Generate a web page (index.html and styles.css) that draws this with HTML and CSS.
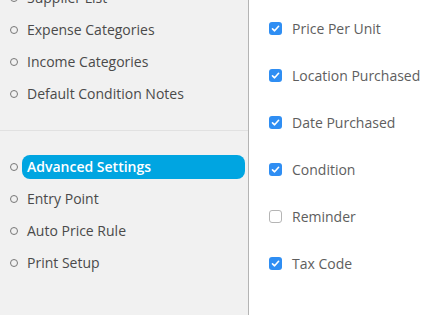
FILE: index.html
```html
<!DOCTYPE html>
<html>
<head>
<meta charset="utf-8">
<link rel="stylesheet" href="styles.css">
</head>
<body>
<div class="page">
  <aside class="sidebar">
    <ul class="menu menu-top">
      <li class="item cut"><span class="label">Supplier List</span></li>
      <li class="item"><span class="label">Expense Categories</span></li>
      <li class="item"><span class="label">Income Categories</span></li>
      <li class="item"><span class="label">Default Condition Notes</span></li>
    </ul>
    <ul class="menu menu-bottom">
      <li class="item active"><span class="label">Advanced Settings</span></li>
      <li class="item"><span class="label">Entry Point</span></li>
      <li class="item"><span class="label">Auto Price Rule</span></li>
      <li class="item"><span class="label">Print Setup</span></li>
    </ul>
  </aside>
  <main class="content">
    <label class="opt"><span class="box on"><svg viewBox="0 0 13 13"><path d="M3.5 6.8 L5.6 8.8 L9.6 4.3" fill="none" stroke="#fff" stroke-width="1.6" stroke-linecap="round" stroke-linejoin="round"/></svg></span>Price Per Unit</label>
    <label class="opt"><span class="box on"><svg viewBox="0 0 13 13"><path d="M3.5 6.8 L5.6 8.8 L9.6 4.3" fill="none" stroke="#fff" stroke-width="1.6" stroke-linecap="round" stroke-linejoin="round"/></svg></span>Location Purchased</label>
    <label class="opt"><span class="box on"><svg viewBox="0 0 13 13"><path d="M3.5 6.8 L5.6 8.8 L9.6 4.3" fill="none" stroke="#fff" stroke-width="1.6" stroke-linecap="round" stroke-linejoin="round"/></svg></span>Date Purchased</label>
    <label class="opt"><span class="box on"><svg viewBox="0 0 13 13"><path d="M3.5 6.8 L5.6 8.8 L9.6 4.3" fill="none" stroke="#fff" stroke-width="1.6" stroke-linecap="round" stroke-linejoin="round"/></svg></span>Condition</label>
    <label class="opt"><span class="box"></span>Reminder</label>
    <label class="opt"><span class="box on"><svg viewBox="0 0 13 13"><path d="M3.5 6.8 L5.6 8.8 L9.6 4.3" fill="none" stroke="#fff" stroke-width="1.6" stroke-linecap="round" stroke-linejoin="round"/></svg></span>Tax Code</label>
  </main>
</div>
</body>
</html>
```
FILE: styles.css
```css
* { box-sizing: border-box; }
html, body { margin: 0; padding: 0; }
body {
  width: 447px;
  height: 315px;
  overflow: hidden;
  background: #fff;
  font-family: "Open Sans", "Liberation Sans", sans-serif;
  font-size: 14px;
}
.page {
  display: flex;
  height: 315px;
}
.sidebar {
  width: 249px;
  flex: none;
  background: #f1f1f1;
  border-right: 1px solid #b4b4b4;
}
.menu {
  list-style: none;
  margin: 0;
  padding: 0 3px 0 0;
  display: flex;
  flex-direction: column;
  gap: 8px;
}
.menu-top {
  margin-top: -14px;
  padding-bottom: 24px;
  border-bottom: 1px solid #e1e1e1;
}
.menu-bottom {
  padding-top: 24px;
}
.item {
  display: flex;
  align-items: center;
  height: 24px;
  padding-left: 10px;
  color: #4a4a4a;
}
.item::before {
  content: "";
  width: 6px;
  height: 6px;
  border: 1px solid #777;
  border-radius: 50%;
  margin-right: 4px;
  flex: none;
}
.label {
  flex: 1;
  height: 24px;
  line-height: 24px;
  padding-left: 5px;
  border-radius: 8px;
}
.active .label {
  background: #00a5e1;
  color: #fff;
  font-weight: 600;
}
.content {
  flex: 1;
  padding: 17px 0 0 20px;
  display: flex;
  flex-direction: column;
  gap: 25px;
}
.opt {
  display: flex;
  align-items: center;
  height: 22px;
  color: #5e5e5e;
}
.box {
  width: 13px;
  height: 13px;
  border-radius: 3px;
  border: 1px solid #b5b5b5;
  background: #fff;
  margin-right: 10px;
  flex: none;
  display: flex;
}
.box.on {
  border: none;
  background: #2f8ef3;
}
.box svg { width: 13px; height: 13px; }
```
